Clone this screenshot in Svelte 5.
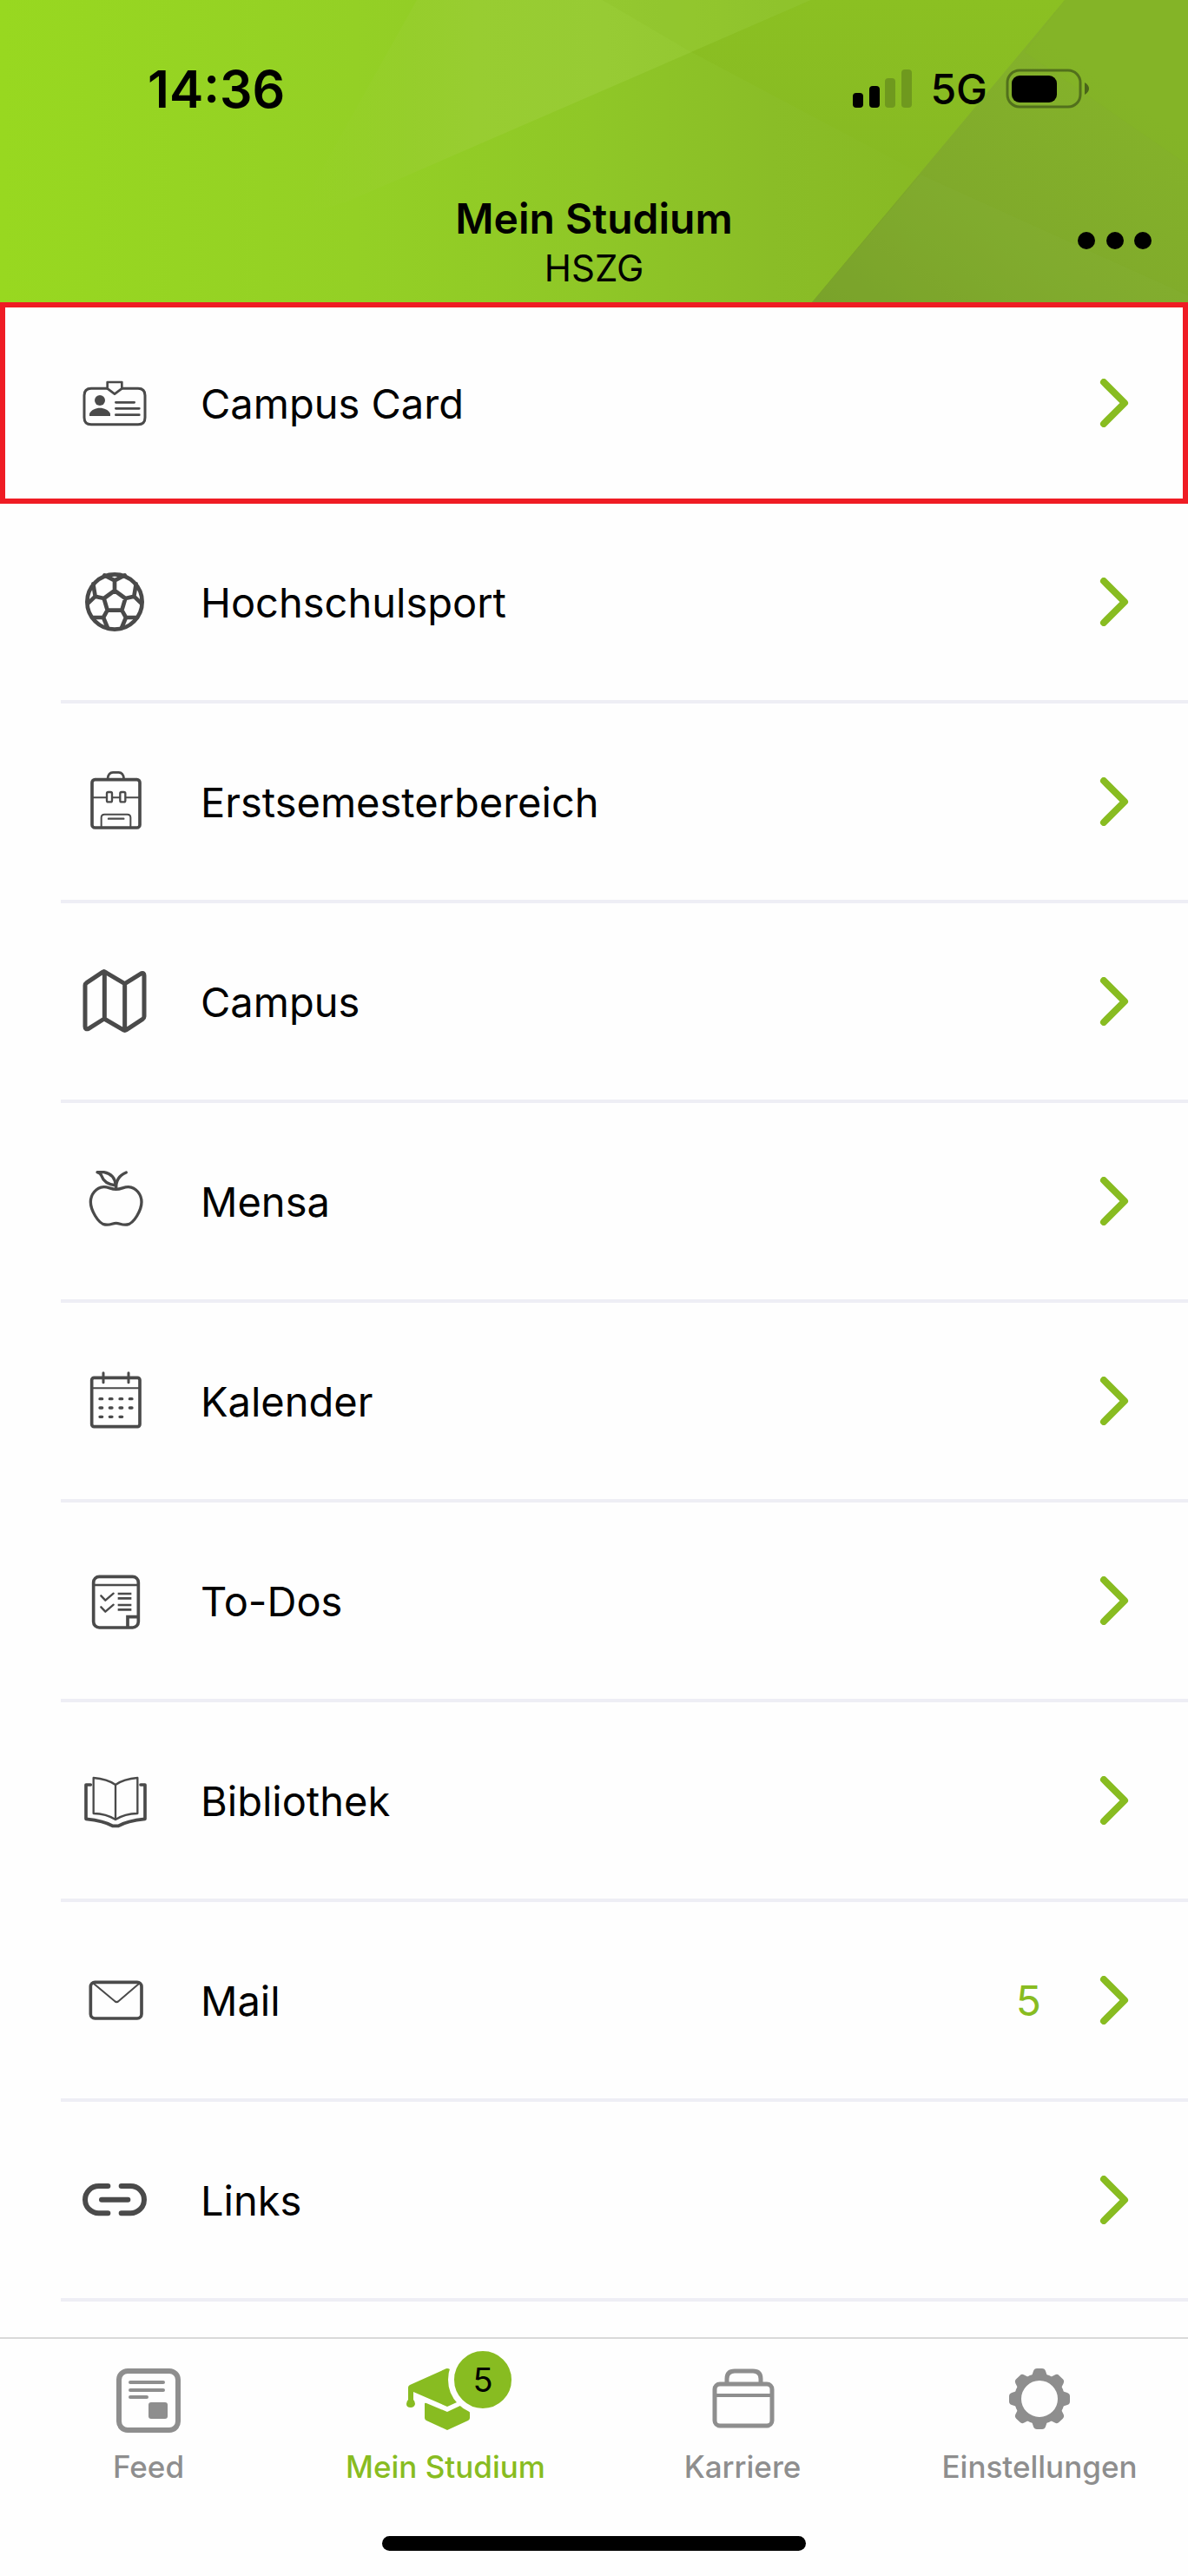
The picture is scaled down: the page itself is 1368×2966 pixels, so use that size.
<style>
:global(body) {
  margin: 0;
  background: #fefefe;
}

.app {
  display: flex;
  flex-direction: column;
  min-height: 100vh;
  background: #fefefe;
  color: #000;
  font-family: Inter, "Liberation Sans", sans-serif;
  font-size: 48px;
}

button {
  border: 0;
  padding: 0;
  background: none;
  color: inherit;
  font: inherit;
  cursor: pointer;
}

a {
  color: inherit;
  text-decoration: none;
}

svg {
  display: block;
  flex: none;
}

header {
  position: relative;
  padding-top: 72px;
}

.facets {
  position: absolute;
  inset: 0;
  width: 100%;
  height: 100%;
}

.status {
  position: relative;
  display: flex;
  align-items: center;
  justify-content: space-between;
  height: 60px;
  padding: 0 114px 0 170px;
}

.time {
  font-size: 59px;
  font-weight: 600;
}

.indicators {
  display: flex;
  align-items: center;
  gap: 21px;
  font-weight: 500;
}

.titlebar {
  position: relative;
  display: grid;
  grid-template-columns: 1fr auto 1fr;
  padding: 92px 40px 10px;
}

.heading {
  grid-column: 2;
  text-align: center;
}

h1 {
  margin: 0;
  font-size: 48px;
  font-weight: 600;
  line-height: 56px;
}

.heading p {
  margin: 0;
  font-size: 42px;
  line-height: 58px;
}

.more {
  justify-self: end;
  height: 106px;
}

main {
  flex: 1;
}

ul {
  list-style: none;
  margin: 0;
  padding: 0;
}

.entry {
  display: flex;
  margin-left: 70px;
  border-bottom: 4px solid #eeeef5;
}

.entry a {
  flex: 1;
  display: flex;
  align-items: center;
  height: 226px;
  padding: 0 68px 0 24px;
}

.entry.marked {
  margin-left: 0;
  border: 6px solid #ef1c24;
}

.entry.marked a {
  height: 220px;
  padding: 0 62px 0 88px;
}

.name {
  flex: 1;
  margin-left: 61px;
  font-size: 47px;
}

.count {
  margin-right: 67px;
  color: #88bc21;
}

.tabbar {
  border-top: 2px solid #d9d9d9;
  padding-bottom: 29px;
}

.tabs {
  display: grid;
  grid-template-columns: repeat(4, 1fr);
}

.tab {
  display: flex;
  flex-direction: column;
  align-items: center;
  gap: 19px;
  padding-top: 32px;
  color: #8e8e8e;
  font-size: 35px;
  font-weight: 500;
  line-height: 40px;
}

.tab.active {
  color: #88bc21;
}

.tab-icon {
  position: relative;
}

.badge {
  position: absolute;
  top: -25px;
  left: 50px;
  width: 66px;
  height: 66px;
  border: 7px solid #fefefe;
  border-radius: 50%;
  background: #88bc21;
  color: #000;
  font-size: 38px;
  font-weight: 400;
  line-height: 66px;
  text-align: center;
}

.home-indicator {
  width: 488px;
  height: 17px;
  margin: 60px auto 0;
  border-radius: 9px;
  background: #000;
}
</style>

<script>
  // every icon is drawn on a 228 x 228 field
  const entries = [
    {
      name: 'Campus Card',
      box: '103 79 228 228',
      icon: `<path stroke-width="9" d="M192 143H136Q112 143 112 167V243Q112 267 136 267H298Q322 267 322 243V167Q322 143 298 143H242"/>
        <path stroke-width="8" d="M192 143V121H242V143L217 162Z"/>
        <g fill="#4a4a4a" stroke="none"><circle cx="166" cy="184" r="18"/><path d="M130 238V230C142 204 190 204 202 230V238Z"/></g>
        <path stroke-width="8" d="M221 191H285M221 212H302M221 234H302"/>`
    },
    {
      name: 'Hochschulsport',
      box: '103 768 228 228',
      icon: `<circle cx="217" cy="882" r="95" stroke-width="14"/>
        <path stroke-width="14" d="M217 843L254 870L242 911H192L180 870ZM217 843V808L182 790M217 808L252 790M180 870L150 863L143 820M150 863L126 886M254 870L284 863L291 820M284 863L308 886M192 911L178 936L193 972M178 936H140M242 911L256 936L241 972M256 936H294"/>`
    },
    {
      name: 'Erstsemesterbereich',
      box: '103 77 228 228',
      icon: `<rect x="139" y="115" width="165" height="166" rx="10" stroke-width="11"/>
        <path stroke-width="8" d="M193 112Q195 90 211 90H231Q247 90 249 112"/>
        <path stroke-width="6" d="M142 177H188M210 177H234M256 177H302M171 278V246Q171 235 182 235H261Q272 235 272 246V278"/>
        <rect x="190" y="158" width="18" height="34" rx="5" stroke-width="7"/>
        <rect x="236" y="158" width="18" height="34" rx="5" stroke-width="7"/>
        <path stroke-width="7" d="M196 250H248"/>`
    },
    {
      name: 'Campus',
      box: '103 767 228 228',
      icon: `<path stroke-width="15" d="M181 778L252 820L310 784Q319 781 319 792V933Q319 939 314 942L258 979Q252 983 246 979L181 941L127 975Q115 980 115 968V826Q115 820 121 816L175 780Q181 776 187 781M182 780V941M252 820V980"/>`
    },
    {
      name: 'Mensa',
      box: '103 76 228 228',
      icon: `<path stroke-width="10" d="M222 149C203 149 195 140 179 141C153 143 134 166 134 193C134 220 160 268 184 271C202 274 209 266 222 266C235 266 242 274 260 271C284 268 310 220 310 193C310 166 291 143 265 141C249 140 241 149 222 149ZM222 147C221 120 231 101 257 91"/>
        <path stroke-width="10" d="M157 90H180C207 95 219 111 221 136C190 132 177 119 172 103Q169 94 157 90Z"/>`
    },
    {
      name: 'Kalender',
      box: '103 765 228 228',
      icon: `<rect x="138" y="799" width="166" height="169" rx="8" stroke-width="11"/>
        <path stroke-width="9" d="M178 782V815M265 782V815"/>
        <path stroke-width="6" d="M142 835H301"/>
        <path stroke-width="10" d="M166 872H174M200 872H208M235 872H243M269 872H277M166 903H174M200 903H208M235 903H243M269 903H277M166 934H174M200 934H208M235 934H243"/>`
    },
    {
      name: 'To-Dos',
      box: '103 75 228 228',
      icon: `<rect x="144" y="106" width="155" height="176" rx="20" stroke-width="11"/>
        <path stroke-width="7" d="M147 135H296"/>
        <path stroke-width="11" stroke-linejoin="miter" d="M262 278V245H296"/>
        <path stroke-width="7" d="M170 172L185 188L213 164M170 211L185 227L213 203"/>
        <path stroke-width="8" stroke-linecap="butt" d="M228 165H275M228 181H275M228 204H275M228 220H275"/>`
    },
    {
      name: 'Bibliothek',
      box: '103 764 228 228',
      icon: `<path stroke-width="7" d="M220 824C199 809 171 802 144 800V923Q188 924 220 944Q252 924 296 923V800C269 802 241 809 220 824V942"/>
        <path stroke-width="11" d="M134 824H118V942C156 946 188 953 210 966H230C252 953 284 946 322 942V824H307"/>`
    },
    {
      name: 'Mail',
      count: 5,
      box: '103 74 228 228',
      icon: `<rect x="134" y="126" width="176" height="125" rx="15" stroke-width="11"/>
        <path stroke-width="6" d="M145 131L217 191Q224 198 231 191L301 131"/>`
    },
    {
      name: 'Links',
      box: '103 763 228 228',
      icon: `<path stroke-width="18" d="M194 829H162A46.500 46.500 0 0 0 162 923H194M240 829H272A46.500 46.500 0 0 1 272 923H240M172 876H263"/>`
    }
  ];

  let marked = 'Campus Card';

  let tabs = [
    {
      name: 'Feed',
      width: 76,
      icon: `<rect x="4" y="5" width="68" height="68" rx="10" fill="none" stroke="currentColor" stroke-width="6"/>
        <path fill="none" stroke="currentColor" stroke-width="4" stroke-linecap="round" d="M17 18H55M17 27H55M17 35H36"/>
        <rect x="38" y="41" width="22" height="19" rx="3"/>`
    },
    {
      name: 'Mein Studium',
      width: 94,
      badge: 5,
      icon: `<path d="M46 3Q49 1 52 3L92 22Q94 25 91 27L49 46L10 29V38Q12 40 12 43Q11 47 7 47Q2 47 2 43Q2 40 4 38V24Q4 22 6 21Z"/>
        <path d="M23 43Q23 41 25 42L49 52L66 44Q75 49 75 54V59Q75 61 73 62L49 73L25 62Q23 61 23 59Z"/>`
    },
    {
      name: 'Karriere',
      width: 76,
      icon: `<g fill="none" stroke="currentColor" stroke-width="5"><rect x="6" y="20" width="66" height="48" rx="6"/><path d="M20 20V14Q20 5 29 5H50Q59 5 59 14V20"/><path stroke-width="4" d="M6 33H72"/></g>`
    },
    {
      name: 'Einstellungen',
      width: 76,
      icon: `<circle cx="38" cy="37" r="25" fill="none" stroke="currentColor" stroke-width="8"/>
        <path id="tooth" d="M28 14L31 5Q32 2 35 2H41Q44 2 45 5L48 14Z"/>
        ${[45, 90, 135, 180, 225, 270, 315].map((a) => `<use href="#tooth" transform="rotate(${a} 38 37)"/>`).join('')}`
    }
  ];

  let active = 'Mein Studium';
</script>

<div class="app">
  <header>
    <svg class="facets" viewBox="0 0 1368 348" preserveAspectRatio="none" aria-hidden="true">
      <defs>
        <linearGradient id="base">
          <stop offset="0" stop-color="#98d820" />
          <stop offset="0.3" stop-color="#94d025" />
          <stop offset="0.5" stop-color="#8fc727" />
          <stop offset="0.65" stop-color="#8abd27" />
          <stop offset="0.8" stop-color="#87b923" />
        </linearGradient>
        <linearGradient id="light">
          <stop offset="0" stop-color="#97d02b" stop-opacity="0" />
          <stop offset="0.35" stop-color="#98cd31" />
          <stop offset="0.6" stop-color="#97cb34" />
          <stop offset="1" stop-color="#90c42e" />
        </linearGradient>
        <linearGradient id="mid" x1="0" y1="0" x2="0" y2="1">
          <stop offset="0" stop-color="#8bc022" />
          <stop offset="1" stop-color="#87b923" />
        </linearGradient>
        <linearGradient id="dark" x1="0" y1="1" x2="0.7" y2="0.2">
          <stop offset="0" stop-color="#759d26" />
          <stop offset="0.5" stop-color="#80aa2b" />
          <stop offset="1" stop-color="#84b22a" />
        </linearGradient>
      </defs>
      <rect width="1368" height="348" fill="url(#base)" />
      <path d="M480 0H934L796 60L400 232L340 250Z" fill="url(#light)" />
      <path d="M694 0H934L796 60Z" fill="#8bc022" opacity="0.25" />
      <path d="M934 0H1230L1060 200L796 60Z" fill="url(#mid)" />
      <path d="M1226 0H1368V348H935Z" fill="url(#dark)" />
      <path d="M1060 201L1368 340V348H935Z" fill="#86b135" opacity="0.3" />
      <path d="M1226 0H1368V190L1180 60Z" fill="#84b524" opacity="0.5" />
    </svg>

    <div class="status">
      <span class="time">14:36</span>
      <div class="indicators">
        <svg width="68" height="44" viewBox="0 0 68 44" role="img" aria-label="Signal">
          <rect y="27" width="12" height="17" rx="4" />
          <rect x="19" y="19" width="12" height="25" rx="4" />
          <rect x="37" y="10" width="12" height="34" rx="4" fill="#6f991e" />
          <rect x="56" width="12" height="44" rx="4" fill="#6f991e" />
        </svg>
        <span>5G</span>
        <svg width="96" height="46" viewBox="0 0 96 46" role="img" aria-label="Akku">
          <rect x="2" y="2" width="84" height="42" rx="14" fill="none" stroke="#52701c" stroke-width="3" />
          <rect x="7" y="8" width="52" height="31" rx="9" />
          <path d="M91 16Q96 19 96 23Q96 27 91 30Z" fill="#4a651a" />
        </svg>
      </div>
    </div>

    <div class="titlebar">
      <div class="heading">
        <h1>Mein Studium</h1>
        <p>HSZG</p>
      </div>
      <button class="more" aria-label="Mehr">
        <svg width="88" height="20" viewBox="0 0 88 20">
          <circle cx="11" cy="10" r="10" />
          <circle cx="44" cy="10" r="10" />
          <circle cx="76" cy="10" r="10" />
        </svg>
      </button>
    </div>
  </header>

  <main>
    <ul>
      {#each entries as entry}
        <li class="entry" class:marked={entry.name === marked}>
          <a href="#{entry.name}">
            <svg width="76" height="76" viewBox={entry.box} fill="none" stroke="#4a4a4a" stroke-linecap="round" stroke-linejoin="round" aria-hidden="true">
              {@html entry.icon}
            </svg>
            <span class="name">{entry.name}</span>
            {#if entry.count}
              <span class="count">{entry.count}</span>
            {/if}
            <svg width="34" height="56" viewBox="0 0 34 56" fill="none" stroke="#88bc21" stroke-width="8" stroke-linecap="round" stroke-linejoin="round" aria-hidden="true">
              <path d="M5 4L29 28L5 52" />
            </svg>
          </a>
        </li>
      {/each}
    </ul>
  </main>

  <nav class="tabbar">
    <div class="tabs">
      {#each tabs as tab}
        <button class="tab" class:active={tab.name === active} on:click={() => (active = tab.name)}>
          <span class="tab-icon">
            <svg width={tab.width} height="76" viewBox="0 0 {tab.width} 76" fill="currentColor" aria-hidden="true">
              {@html tab.icon}
            </svg>
            {#if tab.badge}
              <span class="badge">{tab.badge}</span>
            {/if}
          </span>
          <span>{tab.name}</span>
        </button>
      {/each}
    </div>
    <div class="home-indicator"></div>
  </nav>
</div>
